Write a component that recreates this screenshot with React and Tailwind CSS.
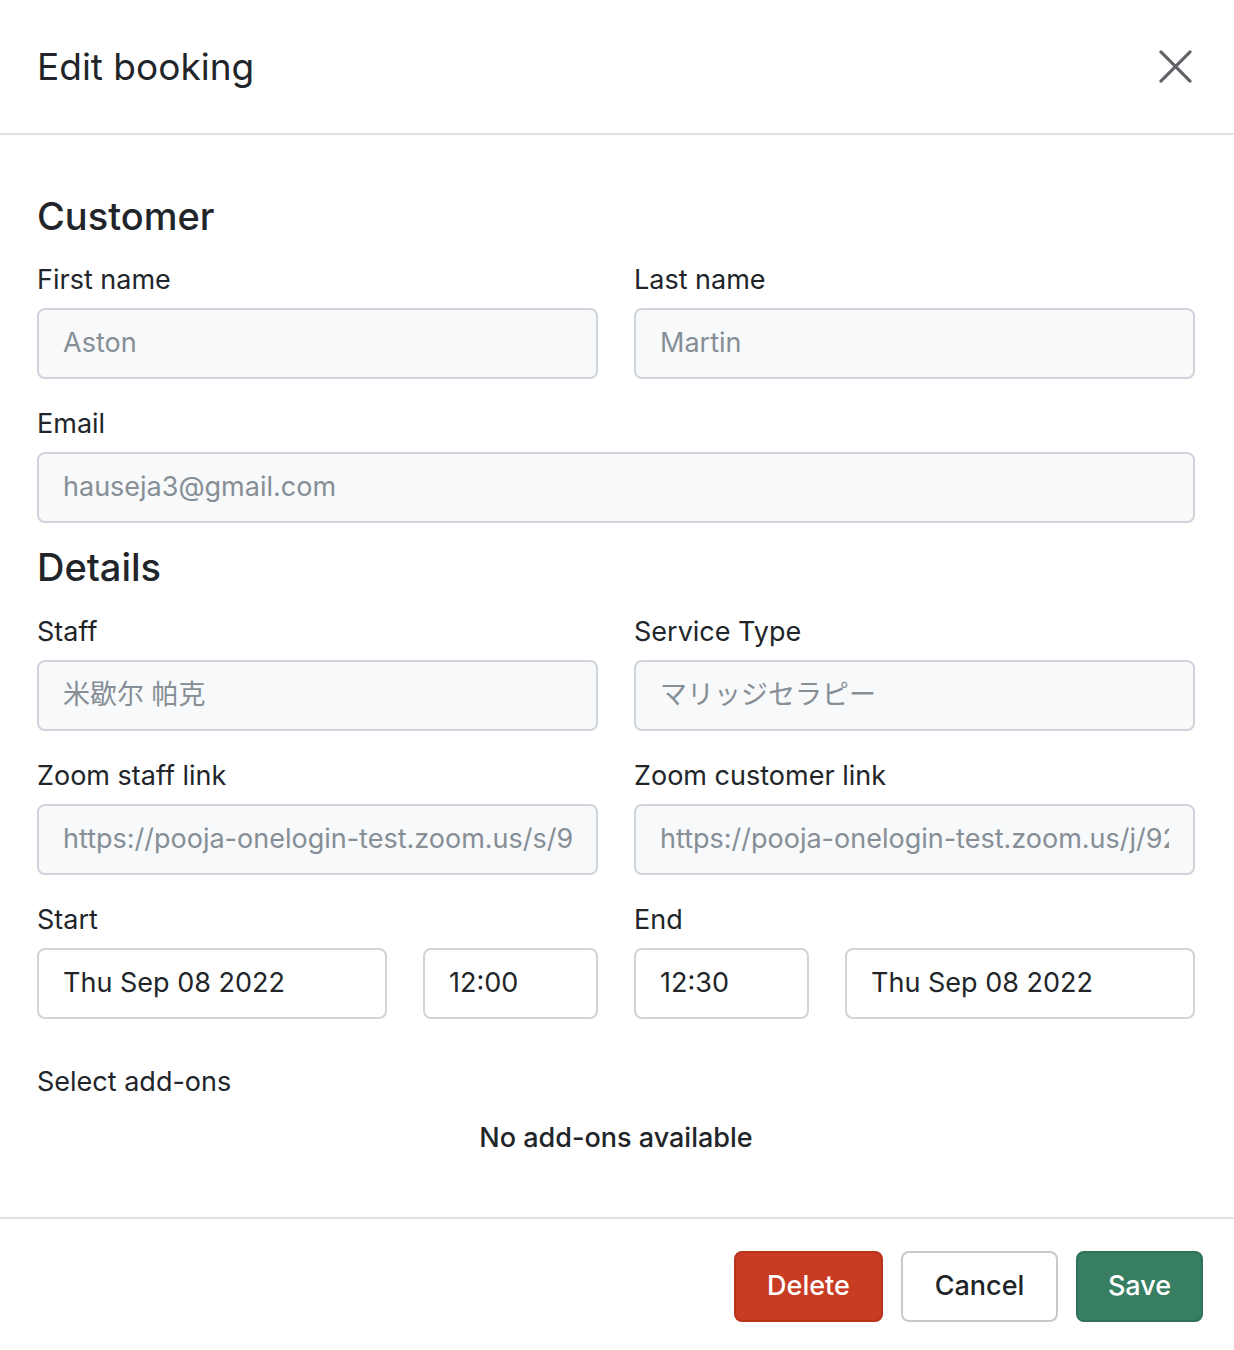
import React from 'react';

const font = { fontFamily: 'Inter, "Noto Sans CJK JP", "Noto Sans CJK SC", sans-serif' };

function Label({ children }) {
  return <div className="text-[27px] leading-[34px] text-[#212529] mb-[11px]">{children}</div>;
}

function Field({ value, disabled = true, className = '' }) {
  return (
    <div
      className={`h-[71px] rounded-[8px] border-2 border-[#ced4da] px-[24px] flex items-center text-[27px] ${
        disabled ? 'bg-[#f8f9fa] text-[#868e96]' : 'bg-white text-[#212529]'
      } ${className}`}
    >
      <div className="overflow-hidden whitespace-nowrap w-full">{value}</div>
    </div>
  );
}

function Group({ label, value, className = '' }) {
  return (
    <div className={className}>
      <Label>{label}</Label>
      <Field value={value} />
    </div>
  );
}

export default function App() {
  return (
    <div className="w-[1234px] h-[1350px] bg-white flex flex-col" style={font}>
      {/* header */}
      <div className="h-[135px] border-b-2 border-[#dee2e6] flex items-center justify-between pl-[37px] pr-[42px]">
        <h1 className="text-[37px] leading-[48px] text-[#212529] font-normal">Edit booking</h1>
        <svg width="33" height="33" viewBox="0 0 34 34" fill="none" stroke="#5f6368" strokeWidth="3.2" strokeLinecap="round">
          <path d="M2 2 L32 32 M32 2 L2 32" />
        </svg>
      </div>

      {/* body */}
      <div className="flex-1 pl-[37px] pr-[39px] pt-[59px]">
        <h2 className="text-[38px] leading-[44px] font-medium text-[#212529] mb-[25px]">Customer</h2>
        <div className="grid grid-cols-2 gap-x-[36px]">
          <Group label="First name" value="Aston" />
          <Group label="Last name" value="Martin" />
        </div>
        <Group className="mt-[28px]" label="Email" value="hauseja3@gmail.com" />

        <h2 className="text-[38px] leading-[44px] font-medium text-[#212529] mt-[22px] mb-[26px]">Details</h2>
        <div className="grid grid-cols-2 gap-x-[36px] gap-y-[28px]">
          <Group label="Staff" value="米歇尔 帕克" />
          <Group label="Service Type" value="マリッジセラピー" />
          <Group label="Zoom staff link" value="https://pooja-onelogin-test.zoom.us/s/9" />
          <Group label="Zoom customer link" value="https://pooja-onelogin-test.zoom.us/j/92" />
          <div>
            <Label>Start</Label>
            <div className="flex gap-[36px]">
              <Field disabled={false} className="flex-1" value="Thu Sep 08 2022" />
              <Field disabled={false} className="w-[175px]" value="12:00" />
            </div>
          </div>
          <div>
            <Label>End</Label>
            <div className="flex gap-[36px]">
              <Field disabled={false} className="w-[175px]" value="12:30" />
              <Field disabled={false} className="flex-1" value="Thu Sep 08 2022" />
            </div>
          </div>
        </div>

        <div className="mt-[46px] text-[27px] leading-[34px] text-[#212529]">Select add-ons</div>
        <div className="mt-[22px] text-[27px] leading-[34px] text-[#212529] text-center font-medium">No add-ons available</div>
      </div>

      {/* footer */}
      <div className="border-t-2 border-[#dee2e6] h-[133px] flex items-start justify-end gap-[18px] pt-[32px] pr-[31px]">
        <button className="h-[71px] w-[149px] rounded-[8px] bg-[#c93c24] border-2 border-[#b8321c] text-white text-[27px] font-medium">Delete</button>
        <button className="h-[71px] w-[157px] rounded-[8px] bg-white border-2 border-[#c6c9cd] text-[#212529] text-[27px] font-medium">Cancel</button>
        <button className="h-[71px] w-[127px] rounded-[8px] bg-[#377e62] border-2 border-[#2f7257] text-white text-[27px] font-medium">Save</button>
      </div>
    </div>
  );
}
